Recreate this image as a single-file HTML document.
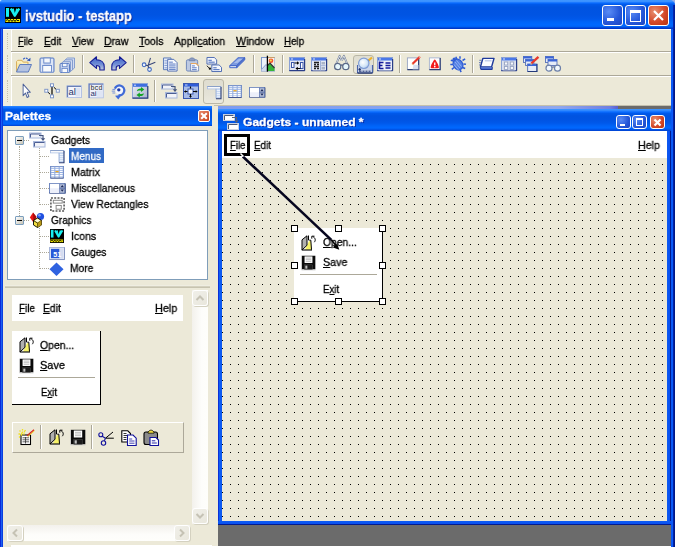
<!DOCTYPE html>
<html><head><meta charset="utf-8"><title>ivstudio - testapp</title>
<style>
html,body{margin:0;padding:0;}
body{width:675px;height:547px;overflow:hidden;position:relative;background:#ece9d8;font-family:"Liberation Sans",sans-serif;font-size:11px;color:#000;}
.a{position:absolute;}
svg{position:absolute;overflow:visible;}
u{text-decoration:underline;text-underline-offset:1px;text-decoration-thickness:1px;}
.t{position:absolute;white-space:nowrap;line-height:13px;font-size:11px;transform-origin:0 0;will-change:transform;-webkit-text-stroke-width:0.3px;}
#title{left:0;top:0;width:675px;height:29px;background:linear-gradient(to bottom,#3f97ff 0px,#3a90ff 1.5px,#0a6cff 3px,#0059ea 4.5px,#0053e0 7px,#0054e3 15px,#0058ea 19px,#0064f8 22px,#0068ff 25px,#0062f5 26.5px,#0040d0 28px,#002fc0 29px);border-radius:2px 5px 0 0;}
#title .txt{left:25px;top:9px;color:#fff;font-weight:bold;font-size:13.5px;line-height:16px;letter-spacing:-0.22px;text-shadow:1px 1px 1px #0a1883;}
.cb{position:absolute;top:5px;width:19px;height:19px;border:1px solid #fff;border-radius:3px;background:radial-gradient(circle at 30% 30%,#5a8cf5 0%,#2456d8 60%,#1e46c0 100%);}
.cb.x{background:radial-gradient(circle at 30% 30%,#e89070 0%,#d4492a 55%,#b8320f 100%);}
#lb{left:0;top:29px;width:3px;height:518px;background:linear-gradient(to right,#0a28d8 0px,#0a28d8 1px,#1a60f0 1px,#1a60f0 2px,#0a3ee0 2px);}
#rb{left:671px;top:29px;width:4px;height:518px;background:linear-gradient(to right,#0a56f4 0px,#0a5cf8 2px,#0428b8 2px,#001a90 3px,#00157c 4px);}
.sv{position:absolute;width:1px;height:18px;background:#aca899;border-right:1px solid #fff;}
.hl{position:absolute;height:1px;}
.pr{position:absolute;width:21px;height:21px;border:1px solid #bab7a6;border-radius:3px;background:linear-gradient(to bottom,#dfddd0,#e4e2d6 60%,#ebe9de);box-sizing:border-box;}
#ptitle{left:3px;top:106px;width:209px;height:20px;background:linear-gradient(to bottom,#2f88ff 0px,#0a6cff 2px,#0059ea 3.5px,#0053e0 6px,#0054e3 10px,#0058ea 13px,#0064f8 16px,#0066fc 18px,#0052e4 19px,#0040d0 20px);}
#ptitle .txt{left:1px;top:3px;color:#fff;font-weight:bold;font-size:12px;line-height:14px;}
.dv{position:absolute;width:0;border-left:1px dotted #aca899;}
.dh{position:absolute;height:0;border-top:1px dotted #aca899;}
.eb{position:absolute;width:7px;height:7px;border:1px solid #7b9ebd;border-radius:1px;background:linear-gradient(to bottom right,#fff,#c5c2b4);}
.eb i{position:absolute;left:1px;top:3px;width:5px;height:1px;background:#000;}
#mdi{left:218px;top:106px;width:453px;height:439px;background:#6b6b6b;}
#child{left:218px;top:106px;width:453px;height:419px;background:#0a46e0;}
#ctitle{left:0;top:4px;width:453px;height:23px;background:linear-gradient(to bottom,#0b5bf0 0%,#2a78ff 8%,#0a5ae8 25%,#0456e2 60%,#0760f5 85%,#0350dc 100%);}
#grid{left:222px;top:158px;width:445px;height:363px;background-color:#ece9d8;background-image:radial-gradient(circle,#000 0.55px,transparent 0.8px);background-size:8px 8px;background-position:-1px 1px;}
.scb{position:absolute;box-sizing:border-box;border:1px solid #fff;border-radius:3px;background:linear-gradient(135deg,#f0efe9,#e9e7dc);box-shadow:1px 1px 0 #d4d1c0;}
.hd{position:absolute;width:5px;height:5px;border:1px solid #000;background:#fff;}
</style></head><body>
<div class="a" style="left:0;top:0;width:8px;height:8px;background:#fff"></div><div class="a" style="left:667px;top:0;width:8px;height:8px;background:#98aee8"></div><div id="title" class="a">
<svg style="left:5px;top:7px" width="16" height="16" viewBox="0 0 16 16"><rect width="16" height="16" fill="#000"/><rect x="1" y="1" width="3" height="8.800" fill="#18f0f0"/><path d="M4.800 2.300L6.500 1l1.300 1 1-.8L9.800 6l1.500-4.800 1 .8 1.300-1 1.500 1.300L10.700 9.500 9.800 10l-.9-.5z" fill="#18f0f0"/><path d="M.5 12h14.500v3H.5z" fill="#f0e800"/><path d="M1 13.500l1.500-1 1.500 2 1.500-2 1.500 2 1.500-2 1.500 2 1.500-2 1.500 1.500 1-1" stroke="#000" stroke-width=".9" fill="none"/></svg>
<div class="t" style="left:25.40px;top:8px;font-size:14px;line-height:16px;transform:scaleX(0.9222);font-weight:bold;color:#fff;text-shadow:1px 1px 1px #0a1883">ivstudio - testapp</div>
<div class="cb" style="left:602px"><div class="a" style="left:4px;top:12px;width:7px;height:3px;background:#fff"></div></div>
<div class="cb" style="left:625px"><div class="a" style="left:4px;top:4px;width:9px;height:8px;border:1px solid #fff;border-top:3px solid #fff"></div></div>
<div class="cb x" style="left:648px"><svg style="left:3px;top:3px" width="13" height="13" viewBox="0 0 13 13"><path d="M2 2l9 9M11 2l-9 9" stroke="#fff" stroke-width="2.200"/></svg></div>
</div>
<div id="lb" class="a"></div><div id="rb" class="a"></div><div class="a" style="left:673px;top:5px;width:2px;height:24px;background:linear-gradient(to right,#0428b8,#001a90)"></div>
<div class="t" style="left:18.00px;top:35px;font-size:11px;line-height:13px;transform:scaleX(0.8526)"><u>F</u>ile</div>
<div class="t" style="left:43.70px;top:35px;font-size:11px;line-height:13px;transform:scaleX(0.9117)"><u>E</u>dit</div>
<div class="t" style="left:71.60px;top:35px;font-size:11px;line-height:13px;transform:scaleX(0.9218)"><u>V</u>iew</div>
<div class="t" style="left:103.60px;top:35px;font-size:11px;line-height:13px;transform:scaleX(0.9500)"><u>D</u>raw</div>
<div class="t" style="left:139.20px;top:35px;font-size:11px;line-height:13px;transform:scaleX(0.9500)"><u>T</u>ools</div>
<div class="t" style="left:174.00px;top:35px;font-size:11px;line-height:13px;transform:scaleX(0.9481)">Appli<u>c</u>ation</div>
<div class="t" style="left:235.60px;top:35px;font-size:11px;line-height:13px;transform:scaleX(0.9704)"><u>W</u>indow</div>
<div class="t" style="left:284.00px;top:35px;font-size:11px;line-height:13px;transform:scaleX(0.8892)"><u>H</u>elp</div>
<div class="a" style="left:3px;top:29px;width:668px;height:1px;background:#fff"></div><div class="a" style="left:3px;top:30px;width:8px;height:76px;background:#efede0"></div><div class="a" style="left:7px;top:33px;width:0;height:16px;border-left:1px dotted #c4c1b0"></div><div class="a" style="left:7px;top:55px;width:0;height:18px;border-left:1px dotted #c4c1b0"></div><div class="a" style="left:7px;top:80px;width:0;height:22px;border-left:1px dotted #c4c1b0"></div><div class="a" style="left:11px;top:30px;width:1px;height:76px;background:#fff"></div><div class="hl a" style="left:11px;top:51px;width:660px;background:#aca899"></div><div class="hl a" style="left:11px;top:52px;width:660px;background:#fff"></div><div class="hl a" style="left:11px;top:75px;width:660px;background:#aca899"></div><div class="hl a" style="left:11px;top:76px;width:660px;background:#fff"></div>
<div class="pr" style="left:353px;top:55px;height:19px"></div><div class="pr" style="left:203px;top:79px;height:25px"></div>
<svg style="left:15px;top:56.5px" width="16" height="16" viewBox="0 0 16 16" preserveAspectRatio="none"><path d="M1.500 15V4.500l1.200-1.200h4.300l1.300 1.800h4.700v2.500" fill="#fbe9a8" stroke="#d8b060" stroke-width="1"/><path d="M2.300 5h4l1.300 1.800h4.500" fill="none" stroke="#fdf6d8" stroke-width=".8"/><path d="M1.500 15l3.300-7.500h11.700L13.300 15z" fill="#b4c3e2" stroke="#5f7dbe" stroke-width="1"/><path d="M8.300 2.300c1.200-1.800 4-1.700 5 .6" fill="none" stroke="#3a62c4" stroke-width="1.200" stroke-dasharray="2 .8"/><path d="M11.800 3.600l3.500.6.200-3.400z" fill="#2f55b8"/></svg>
<svg style="left:38.5px;top:56.5px" width="16" height="16" viewBox="0 0 16 16" preserveAspectRatio="none"><rect x="1" y="1" width="14" height="14.200" rx="1" fill="#c2d0ee" stroke="#5a7cc4"/><path d="M2 2h2.500v13H2zM11.500 2H14v13h-2.500z" fill="#dde6f6"/><rect x="4.800" y="1" width="6.500" height="5" fill="#f4f7fc" stroke="#6686c8" stroke-width=".9"/><rect x="3.700" y="8.500" width="8.800" height="6.700" fill="#f8fafd" stroke="#6686c8" stroke-width=".9"/><path d="M1 15.200h14" stroke="#8aa2d4" stroke-width="1"/></svg>
<svg style="left:59px;top:56.5px" width="16" height="16" viewBox="0 0 16 16" preserveAspectRatio="none"><path d="M6 3l2.500-2h7v10l-2.500 2z" fill="#d3dcf0" stroke="#7c96cc" stroke-width=".9"/><path d="M4 4.800l2.500-2h7v10l-2.500 2z" fill="#d3dcf0" stroke="#7c96cc" stroke-width=".9"/><path d="M2 6.500l2.500-1.800h7v10L9.500 15.500z" fill="#d3dcf0" stroke="#7c96cc" stroke-width=".9"/><rect x="1" y="6.500" width="9.500" height="9" rx="1" fill="#c2d0ee" stroke="#5a7cc4"/><rect x="3.500" y="6.500" width="4.500" height="3.200" fill="#f4f7fc" stroke="#6686c8" stroke-width=".8"/><rect x="3" y="11.500" width="5.500" height="4" fill="#f8fafd" stroke="#6686c8" stroke-width=".8"/></svg>
<svg style="left:89px;top:55.5px" width="16" height="15" viewBox="0 0 16 16" preserveAspectRatio="none"><defs><linearGradient id="ug" x1="0" y1="0" x2="0" y2="1"><stop offset="0" stop-color="#3f63cc"/><stop offset=".55" stop-color="#6f8cd4"/><stop offset="1" stop-color="#c4cde2"/></linearGradient></defs><path d="M.8 7L7.500 .8V4C12.200 4 15.200 6.800 15.200 11.200V15H10.800V12.500C10.800 10.800 9.800 10.200 7.500 10.200V13.200Z" fill="url(#ug)" stroke="#141c94" stroke-width="1.100" stroke-linejoin="round"/></svg>
<svg style="left:110.5px;top:55.5px" width="16" height="15" viewBox="0 0 16 16" preserveAspectRatio="none"><g transform="translate(16,0) scale(-1,1)"><defs><linearGradient id="ug" x1="0" y1="0" x2="0" y2="1"><stop offset="0" stop-color="#3f63cc"/><stop offset=".55" stop-color="#6f8cd4"/><stop offset="1" stop-color="#c4cde2"/></linearGradient></defs><path d="M.8 7L7.500 .8V4C12.200 4 15.200 6.800 15.200 11.200V15H10.800V12.500C10.800 10.800 9.800 10.200 7.500 10.200V13.200Z" fill="url(#ug)" stroke="#141c94" stroke-width="1.100" stroke-linejoin="round"/></g></svg>
<svg style="left:140.5px;top:56.5px" width="15.5" height="16" viewBox="0 0 16 16" preserveAspectRatio="none"><path d="M9.800.8L7.300 9M14.800 5.200L6 8.800" stroke="#39477a" stroke-width="1.100" fill="none"/><circle cx="3.200" cy="7.800" r="1.900" fill="#eef3fb" stroke="#3f69c0" stroke-width="1.100"/><circle cx="8.800" cy="12.500" r="1.900" fill="#eef3fb" stroke="#3f69c0" stroke-width="1.100"/><path d="M5 8.200l2.300.6M7.900 10.800l-.4-1.800" stroke="#39477a" stroke-width="1.100"/></svg>
<svg style="left:162.5px;top:56.5px" width="15" height="15" viewBox="0 0 16 16" preserveAspectRatio="none"><path d="M.5 1h8l0 12.500h-8z" fill="#e4ebf8" stroke="#5878b8" stroke-width="1"/><path d="M1.500 4h3M1.500 6.500h3M1.500 9h3M1.500 11.500h3" stroke="#7f9ad0"/><path d="M5 2.500h6.500l3.500 3.500v9h-10z" fill="#f8faff" stroke="#4a69b0" stroke-width="1"/><path d="M6.500 5.500h4M6.500 7.500h7M6.500 9.500h7M6.500 11.500h7M6.500 13.200h7" stroke="#3e63b8" stroke-width=".9"/></svg>
<svg style="left:185px;top:56.5px" width="15" height="15" viewBox="0 0 16 16" preserveAspectRatio="none"><rect x="1.500" y="3" width="12" height="12" rx="1.500" fill="#bdc9e2" stroke="#6c84b8"/><path d="M4.500 4V2.500l1.500-1.500h3l1.500 1.500V4z" fill="#8c9cc0" stroke="#6c7fa8" stroke-width=".8"/><path d="M6 7h6l2.500 2.500v5.500h-8.500z" fill="#f8faff" stroke="#6c84b8" stroke-width=".9"/><path d="M6 7h6l2.500 2.500" fill="none" stroke="#e8a860" stroke-width="1.100"/><path d="M7.500 9.500h3M7.500 11.500h5M7.500 13.500h5" stroke="#3e63b8" stroke-width=".9"/></svg>
<svg style="left:206px;top:56.5px" width="15.5" height="15" viewBox="0 0 16 16" preserveAspectRatio="none"><path d="M1 .5h7.500l2.500 2.500v4.500h-10z" fill="#f4f7fd" stroke="#4a69b0" stroke-width="1"/><path d="M2.500 3.500h3.500M2.500 5.500h6.500" stroke="#3e63b8" stroke-width="1"/><path d="M6 8.500h7.500l2.500 2.500v4.500h-10z" fill="#f4f7fd" stroke="#4a69b0" stroke-width="1"/><path d="M7.500 11.500h3.500M7.500 13.500h6.500" stroke="#3e63b8" stroke-width="1"/><path d="M.8 9.300l3 3" stroke="#222" stroke-width="1"/><circle cx="4" cy="12.500" r="1.200" fill="#111"/></svg>
<svg style="left:228.5px;top:56.5px" width="15.5" height="15" viewBox="0 0 16 16" preserveAspectRatio="none"><path d="M.8 9.200L9.300.800h7L8 9.200z" fill="#7d9be0" stroke="#3e63c8" stroke-width="1"/><path d="M.8 9.200h7.200v2.200h-7.200z" fill="#dfe6f6" stroke="#3e63c8" stroke-width="1"/><path d="M8 9.200L16.300.800v2.200L8 11.400z" fill="#5577cc" stroke="#3e63c8" stroke-width="1"/><path d="M5 6.500L10.500 1.800h3.500L8.500 6.500z" fill="#a9bdec"/></svg>
<svg style="left:260px;top:56px" width="16" height="16" viewBox="0 0 16 16" preserveAspectRatio="none"><rect x="1.500" y="1.500" width="13" height="13.500" fill="#eef2fa" stroke="#7f98cc"/><path d="M7.500 1.500h7v13.500h-7z" fill="#fbf0e4"/><path d="M7.500 1.500h7" stroke="#c9a06a"/><circle cx="11" cy="4.800" r="2.300" fill="#f2542c"/><circle cx="10.800" cy="4.500" r="1.100" fill="#f9e05a"/><path d="M1.500 13.500l4.500-5 1.500 1.500v5h-6z" fill="#cfd9ee"/><path d="M1.500 13.500l4.500-5 1.500 1.500" fill="none" stroke="#8ea2cc" stroke-width="1"/><path d="M7.500 15V9.500l2.500-2.500 4.500 5v3z" fill="#35b53a"/><path d="M7.500 9.500l2.500-2.500 4.500 5" fill="none" stroke="#333" stroke-width="1.200"/><path d="M7.400 -.3v16" stroke="#000" stroke-width="1.300"/></svg>
<svg style="left:288.5px;top:55.5px" width="16" height="16" viewBox="0 0 16 16" preserveAspectRatio="none"><rect x=".5" y="1.500" width="15" height="13" fill="#e2e6f2" stroke="#8aa0d4" stroke-width="1"/><rect x="1" y="2" width="14" height="2.500" fill="#4a78e8"/><path d="M2 3h2" stroke="#fff" stroke-width=".8"/><path d="M.3 14.700h15.400M15.600 3v11.700" stroke="#2a3e88" stroke-width="1.200" fill="none"/><rect x="2.500" y="6.500" width="2.500" height="5" fill="#fff" stroke="#3a56a8"/><rect x="11.500" y="6.500" width="2.500" height="6" fill="#fff" stroke="#3a56a8"/><path d="M5.500 7h3.500M7 12.500h4.500" stroke="#000" stroke-width="1.200"/><path d="M8 5.300l2.300 1.700L8 8.700zM8.800 10.800L6.500 12.500l2.300 1.700z" fill="#000"/></svg>
<svg style="left:310.5px;top:55.5px" width="16" height="16" viewBox="0 0 16 16" preserveAspectRatio="none"><rect x=".5" y="1.500" width="15" height="13" fill="#e2e6f2" stroke="#8aa0d4" stroke-width="1"/><rect x="1" y="2" width="14" height="2.500" fill="#4a78e8"/><path d="M2 3h2" stroke="#fff" stroke-width=".8"/><path d="M.3 14.700h15.400M15.600 3v11.700" stroke="#2a3e88" stroke-width="1.200" fill="none"/><rect x="1.500" y="5" width="13" height="9.500" fill="#e4e9f4"/><path d="M3 6.500h5M3 8.500h2M6 8.500h2M3 10.500h5M3 12.500h2M6 12.500h2" stroke="#222" stroke-width="1.300"/><path d="M9.500 5v9.500" stroke="#9fb0d6"/><rect x="10.500" y="6" width="3.500" height="2.500" fill="#aab4c8"/><rect x="10.500" y="11" width="3.500" height="2.500" fill="#aab4c8"/><path d="M9.500 9.700h5" stroke="#9fb0d6"/></svg>
<svg style="left:333.5px;top:54.8px" width="15.5" height="16" viewBox="0 0 16 16" preserveAspectRatio="none"><path d="M2.300 9L5.800 .8l2 4.700M13.700 9L10.200 .8l-2 4.700" stroke="#66748e" stroke-width="1.900" fill="none" stroke-linejoin="round"/><path d="M2.300 9L5.800 .8l2 4.700M13.700 9L10.200 .8l-2 4.700" stroke="#f4f6fa" stroke-width=".8" fill="none" stroke-linejoin="round"/><circle cx="3.800" cy="11.500" r="3.200" fill="#e8f8fc" stroke="#5c6a88" stroke-width="1.300"/><circle cx="12.200" cy="11.500" r="3.200" fill="#e8f8fc" stroke="#5c6a88" stroke-width="1.300"/><path d="M6.700 10.500c.9-.7 1.700-.7 2.600 0" stroke="#5c6a88" stroke-width="1.300" fill="none"/></svg>
<svg style="left:356.5px;top:56.5px" width="16" height="16" viewBox="0 0 16 16" preserveAspectRatio="none"><defs><radialGradient id="mg" cx=".4" cy=".4" r=".7"><stop offset="0" stop-color="#ffffff"/><stop offset=".6" stop-color="#d4e6f8"/><stop offset="1" stop-color="#9ebce8"/></radialGradient></defs><path d="M.5 8v8h15V8" fill="#ccd6ea" stroke="none"/><path d="M.5 8v8M15.500 8v8" fill="none" stroke="#4a64a8" stroke-width="1.100"/><path d="M.5 16h15" stroke="#1e3270" stroke-width="1.400"/><path d="M2 11.800h1.300v1.300H2zM2 14.200h2.500M5.500 14.200h2M8.500 14.200h2M11.500 14.200h2" stroke="#1e3270" fill="#1e3270" stroke-width="1"/><path d="M11.500 3.500L15 .5" stroke="#f0b429" stroke-width="2.200"/><path d="M10.500 4.500l1.300-1.200" stroke="#666" stroke-width="2"/><circle cx="6.800" cy="6.300" r="5.200" fill="url(#mg)" stroke="#7f9cd4" stroke-width="1.200"/></svg>
<svg style="left:376.5px;top:55.5px" width="16" height="16" viewBox="0 0 16 16" preserveAspectRatio="none"><rect x=".5" y="1.500" width="15" height="13" fill="#e2e6f2" stroke="#8aa0d4" stroke-width="1"/><rect x="1" y="2" width="14" height="2.500" fill="#4a78e8"/><path d="M2 3h2" stroke="#fff" stroke-width=".8"/><path d="M.3 14.700h15.400M15.600 3v11.700" stroke="#2a3e88" stroke-width="1.200" fill="none"/><rect x="1.500" y="5" width="13" height="9.500" fill="#eef2fa"/><path d="M2.500 5.500v7.500M2.500 6.500h4M2.500 9.500h3M2.500 12.500h4" stroke="#141a9a" stroke-width="1.600" fill="none"/><path d="M8.500 7h5M8.500 9.500h5M8.500 12h5" stroke="#141a9a" stroke-width="1.300"/></svg>
<svg style="left:406px;top:56px" width="15" height="15" viewBox="0 0 16 16" preserveAspectRatio="none"><rect x="1.500" y="2" width="12" height="12.500" fill="#fff" stroke="#9aa7c4" stroke-width="1"/><path d="M1.500 14.500h12V2" fill="none" stroke="#2c3e74" stroke-width="1.300"/><path d="M8 9L13.500 9.500v5H7z" fill="#c8d3ea" opacity=".7"/><path d="M6.800 8.500L14.800 .8" stroke="#e8382c" stroke-width="2.400"/><path d="M6 9.500l1.200-1.800 1 1z" fill="#f3c073"/><path d="M13.800 1.600l1.200-1" stroke="#f4a090" stroke-width="2"/></svg>
<svg style="left:428px;top:56px" width="15" height="15" viewBox="0 0 16 16" preserveAspectRatio="none"><rect x="1.500" y="2" width="11.500" height="12.500" fill="#fff" stroke="#aab6d0" stroke-width="1"/><path d="M1.500 14.500h11.500V2" fill="none" stroke="#2c3e74" stroke-width="1.300"/><path d="M7.200 4.800C6 6.500 4.300 9.500 3.800 12h6.800C10.100 9.500 8.400 6.500 7.200 4.800z" fill="#f21c1c" stroke="#f21c1c" stroke-width="2" stroke-linejoin="round"/><path d="M7.200 6.800v3" stroke="#fff" stroke-width="1.400"/><circle cx="7.200" cy="11.300" r=".9" fill="#fff"/></svg>
<svg style="left:450px;top:56px" width="16" height="16" viewBox="0 0 16 16" preserveAspectRatio="none"><ellipse cx="8" cy="8.500" rx="4.600" ry="5.600" transform="rotate(-35 8 8.500)" fill="#5580e4" stroke="#2f5cd4" stroke-width="1.200"/><path d="M5 6l5 6M4 8.500l4.500 5.500M6.500 4.500l5 6" stroke="#9ab8f4" stroke-width=".9"/><path d="M3.500 5L.8 4.200M3 8.500H.3M4 11.500l-2.200 1.800M7 3.500L5.800 .8M10 2.800V.3M12.500 4.500L15.200 2.800M13.500 8l2.500.3M12.500 11.500l2.700 1M10 14l1.200 2" stroke="#2f5cd4" stroke-width="1.500"/><circle cx="4.300" cy="3.300" r="1.800" fill="#2f5cd4"/></svg>
<svg style="left:479px;top:56.5px" width="15.5" height="15" viewBox="0 0 16 16" preserveAspectRatio="none"><path d="M4 1.500h11.500L13 10.500H1.500z" fill="#fbfcff" stroke="#1e3a9c" stroke-width="1.500" stroke-linejoin="round"/><path d="M1.200 11l1 2.300h11.300l.3-2.500" fill="#4a6cd0" stroke="#1e3a9c" stroke-width="1.100" stroke-linejoin="round"/><path d="M6 4h7" stroke="#c4d0ec" stroke-width="1.600"/><path d="M.3 3.500h2.200M0 6h1.800M0 8.500h1.200" stroke="#5a72b0" stroke-width="1"/></svg>
<svg style="left:500.5px;top:56px" width="16" height="16" viewBox="0 0 16 16" preserveAspectRatio="none"><rect x=".5" y="1.500" width="15" height="13" fill="#e2e6f2" stroke="#8aa0d4" stroke-width="1"/><rect x="1" y="2" width="14" height="2.500" fill="#4a78e8"/><path d="M2 3h2" stroke="#fff" stroke-width=".8"/><path d="M.3 14.700h15.400M15.600 3v11.700" stroke="#2a3e88" stroke-width="1.200" fill="none"/><rect x="1.500" y="5" width="13" height="9.500" fill="#d4dae8"/><rect x="3.500" y="6" width="3.200" height="3" fill="#f8f9fc" stroke="#98a4c4" stroke-width=".9"/><rect x="9.300" y="6" width="3.200" height="3" fill="#f8f9fc" stroke="#98a4c4" stroke-width=".9"/><rect x="3.500" y="10.500" width="3.200" height="3" fill="#f8f9fc" stroke="#98a4c4" stroke-width=".9"/><rect x="9.300" y="10.500" width="3.200" height="3" fill="#f8f9fc" stroke="#98a4c4" stroke-width=".9"/></svg>
<svg style="left:523px;top:56px" width="16.5" height="16" viewBox="0 0 16 16" preserveAspectRatio="none"><rect x="0.5" y="0.5" width="8" height="6" fill="#e6ecf8" stroke="#5570b8" stroke-width=".9"/><rect x="0.5" y="0.5" width="8" height="2" fill="#3a64d8"/><rect x="2.5" y="3.5" width="8" height="6" fill="#e6ecf8" stroke="#5570b8" stroke-width=".9"/><rect x="2.5" y="3.5" width="8" height="2" fill="#3a64d8"/><rect x="4.5" y="8" width="9" height="7.5" fill="#e6ecf8" stroke="#5570b8" stroke-width=".9"/><rect x="4.5" y="8" width="9" height="2" fill="#3a64d8"/><path d="M8 7.500L15 .8" stroke="#e8382c" stroke-width="2.300"/><path d="M7 9l1-1.800 1 1z" fill="#f3c073"/><path d="M4.500 15.500h9V8" fill="none" stroke="#243a7a" stroke-width="1"/></svg>
<svg style="left:545px;top:56px" width="16" height="16" viewBox="0 0 16 16" preserveAspectRatio="none"><rect x="0.5" y="0.5" width="8" height="6" fill="#e6ecf8" stroke="#5570b8" stroke-width=".9"/><rect x="0.5" y="0.5" width="8" height="2" fill="#3a64d8"/><rect x="3" y="3.5" width="9" height="6" fill="#e6ecf8" stroke="#5570b8" stroke-width=".9"/><rect x="3" y="3.5" width="9" height="2" fill="#3a64d8"/><circle cx="4" cy="12.200" r="3" fill="#f2f8fc" stroke="#6c7fa8" stroke-width="1.200"/><circle cx="12.500" cy="12.200" r="3" fill="#f2f8fc" stroke="#6c7fa8" stroke-width="1.200"/><path d="M7 11.500c.8-.8 1.800-.8 2.600 0" stroke="#6c7fa8" stroke-width="1.100" fill="none"/></svg>
<div class="sv" style="left:82px;top:55px"></div><div class="sv" style="left:133px;top:55px"></div><div class="sv" style="left:253px;top:55px"></div><div class="sv" style="left:282px;top:55px"></div><div class="sv" style="left:399px;top:55px"></div><div class="sv" style="left:472px;top:55px"></div><div class="sv" style="left:154px;top:80px;height:22px"></div>
<svg style="left:20.8px;top:82.5px" width="13.5" height="16" viewBox="0 0 16 16" preserveAspectRatio="none"><path d="M2.500 1.200v11.500l2.800-2.600 2 4.400 2-.9-2-4.300h3.800z" fill="#fff" stroke="#4a5f98" stroke-width="1.100" stroke-linejoin="round"/></svg>
<svg style="left:44px;top:83px" width="16" height="15.5" viewBox="0 0 16 16" preserveAspectRatio="none"><path d="M8 2.500v11" stroke="#000" stroke-width="1.200"/><path d="M3.500 9l2.500 2.500M10 4.500l2 2" stroke="#000" stroke-width="1"/><rect x="6.500" y=".8" width="3" height="3" fill="#fff" stroke="#7f97c8" stroke-width="1"/><rect x="6.500" y="12.300" width="3" height="3" fill="#fff" stroke="#7f97c8" stroke-width="1"/><rect x=".8" y="6.500" width="3" height="3" fill="#fff" stroke="#7f97c8" stroke-width="1"/><rect x="12.300" y="6.500" width="3" height="3" fill="#fff" stroke="#7f97c8" stroke-width="1"/></svg>
<svg style="left:66px;top:83px" width="16" height="15" viewBox="0 0 16 16" preserveAspectRatio="none"><rect x="1" y="3" width="14.500" height="12.500" fill="#f4f6fc" stroke="#b4c2e4" stroke-width="1"/><path d="M1.500 15V3.500h13.500" fill="none" stroke="#6a80b8" stroke-width="1.300"/><rect x="9.500" y="5" width="5" height="9.500" fill="#dde3f2"/><text x="2.500" y="13" font-family="Liberation Sans" font-size="9.500" fill="#26346c">al</text></svg>
<svg style="left:88px;top:83px" width="15.5" height="15" viewBox="0 0 16 16" preserveAspectRatio="none"><rect x=".8" y=".8" width="15" height="15" fill="#eef1fa" stroke="#b4c2e4" stroke-width="1"/><path d="M1.200 16V1.200h14.500" fill="none" stroke="#6a80b8" stroke-width="1.300"/><rect x="9" y="8" width="6.300" height="7" fill="#dfe5f4"/><text x="2.500" y="7.300" font-family="Liberation Mono" font-size="7" fill="#222" textLength="12.500" lengthAdjust="spacingAndGlyphs">bcd</text><text x="2.500" y="14.300" font-family="Liberation Sans" font-size="8" fill="#26346c">ai</text></svg>
<svg style="left:110.5px;top:83.5px" width="15" height="15" viewBox="0 0 16 16" preserveAspectRatio="none"><circle cx="9" cy="6.800" r="4" fill="#f2f5fc"/><path d="M4.100 5A5.200 5.200 0 1 1 8 11.900" fill="none" stroke="#3f6ad8" stroke-width="2.400"/><path d="M4.300 12.600L11 11.800 7.800 16.600z" fill="#3f6ad8"/><circle cx="8.300" cy="6.200" r="1.800" fill="#1e3aa8"/><path d="M1.500 5.800h3M.8 7.600h3.400M1.500 9.600h3" stroke="#6f8cdc" stroke-width="1"/></svg>
<svg style="left:131.5px;top:82px" width="16" height="16" viewBox="0 0 16 16" preserveAspectRatio="none"><defs><linearGradient id="wg" x1="0" y1="0" x2="1" y2="1"><stop offset="0" stop-color="#eef0f8"/><stop offset="1" stop-color="#a8b2cc"/></linearGradient></defs><rect x=".5" y="1.500" width="15" height="14.500" fill="url(#wg)" stroke="#8ea4d8" stroke-width="1"/><rect x="1" y="2" width="14" height="2.800" fill="#3f6fe0"/><path d="M2 3.200h2" stroke="#fff" stroke-width=".8"/><path d="M.5 16.200h15.300V4" fill="none" stroke="#2a3c78" stroke-width="1.200"/><path d="M5 9.300c0-2 1.500-2.800 4-2.800V5l3.300 2.500L9 10V8.500c-1.500 0-2.500 0-4 .8zM11.800 11.200c0 2-1.500 2.800-4 2.800v1.500L4.500 13l3.300-2.500V12c1.500 0 2.500 0 4-.8z" fill="#12a422"/></svg>
<svg style="left:161px;top:83px" width="16" height="16" viewBox="0 0 16 16" preserveAspectRatio="none"><rect x=".5" y="1" width="11.500" height="5" fill="#f2f3f8" stroke="#a8b8dc" stroke-width="1"/><path d="M1.500 5.500V2h10" fill="none" stroke="#4c5f94" stroke-width="1"/><rect x="4.500" y="9.500" width="11.500" height="5.500" fill="#f2f3f8" stroke="#a8b8dc" stroke-width="1"/><path d="M5.500 14.500v-4h10" fill="none" stroke="#4c5f94" stroke-width="1"/><path d="M10 3.500h4v3.500" fill="none" stroke="#44557f" stroke-width="1.200"/><path d="M11.800 6.300h4.400L14 9z" fill="#44557f"/></svg>
<svg style="left:183px;top:83px" width="16" height="16" viewBox="0 0 16 16" preserveAspectRatio="none"><rect x=".5" y=".5" width="15" height="15" fill="#a8bce8" stroke="#3a58b0" stroke-width="1"/><rect x="1" y="1" width="14" height="2.500" fill="#2f5cd8"/><path d="M2 2h2.500" stroke="#fff" stroke-width=".8"/><rect x="5" y="6" width="5" height="5" fill="#f4f7fd" stroke="#3a58b0" stroke-width="1"/><path d="M7.500 3.500v2M7.500 11v3M1.500 8.500h3M10 8.500h4" stroke="#000" stroke-width="1.200"/><path d="M6.200 13l1.300 2 1.300-2zM12.700 7.200l2 1.300-2 1.300zM3 7.200L1 8.500l2 1.300z" fill="#000"/></svg>
<svg style="left:207px;top:86px" width="14.5" height="13" viewBox="0 0 14.500 13.500" preserveAspectRatio="none"><rect x=".4" y=".4" width="13.600" height="2.600" fill="#fff" stroke="#a8bce0" stroke-width=".8"/><path d="M.5 .6h13.500" stroke="#7088b8" stroke-width=".7"/><rect x="9" y="3" width="5" height="10" fill="#c4d6f2"/><path d="M9.500 4.700h4M9.500 6.700h4M9.500 8.700h4M9.500 10.700h4" stroke="#f2f6fc" stroke-width=".9"/><path d="M9 3v10" stroke="#8ea6d4" stroke-width=".8"/><path d="M14 1v12.200H9" fill="none" stroke="#2c3e74" stroke-width="1.100"/></svg>
<svg style="left:228px;top:85px" width="14" height="13" viewBox="0 0 16 16" preserveAspectRatio="none"><rect x=".5" y=".5" width="15" height="14.500" fill="#94aee0" stroke="#6f8ac4" stroke-width="1"/><path d="M1.500 2.200h13M1.500 4.600h13M1.500 7h13M1.500 9.400h13M1.500 11.800h13M1.500 14h13" stroke="#fff" stroke-width="1.400"/><path d="M5.500 1v14M10.500 1v14" stroke="#94aee0" stroke-width="1.200"/><rect x="6.200" y="6.300" width="3.700" height="1.500" fill="#f0a818"/><path d="M.5 15.300h15" stroke="#3a4f8c" stroke-width="1.200"/></svg>
<svg style="left:249px;top:86.5px" width="16" height="14" viewBox="0 0 16 16" preserveAspectRatio="none"><rect x=".5" y=".5" width="15" height="11" fill="#fff" stroke="#7088c0" stroke-width="1"/><path d="M.5 11.500h15.300V.5" fill="none" stroke="#2c3e74" stroke-width="1.200"/><path d="M1 6h9.500v5.500H1z" fill="#eceffa"/><rect x="10.500" y="1" width="5" height="10.500" fill="#b4bed6" stroke="#6078b0" stroke-width=".8"/><path d="M10.500 6h5" stroke="#4a62a0" stroke-width=".9"/><path d="M11.300 4.800L13 2.200l1.700 2.600zM11.300 7.400L13 10l1.700-2.600z" fill="#1e2c5c"/></svg>
<div id="ptitle" class="a"></div><div class="t" style="left:4.70px;top:110px;font-size:11.5px;line-height:13px;transform:scaleX(1.0498);font-weight:bold;color:#fff">Palettes</div><div class="a" style="left:4px;top:106px;width:208px;height:0"><div class="a" style="left:194px;top:4px;width:10px;height:10px;border:1px solid #fff;border-radius:2px;background:linear-gradient(135deg,#e88a6c,#c8421c)"><svg style="left:1px;top:1px" width="8" height="8" viewBox="0 0 8 8"><path d="M1.200 1.200l5.600 5.600M6.800 1.200l-5.600 5.600" stroke="#fff" stroke-width="2.100"/></svg></div></div>
<div id="tree" class="a" style="left:7px;top:130px;width:199px;height:148px;background:#fff;border:1px solid #7f9db9"></div>
<div class="dv" style="left:19px;top:146px;height:70px"></div><div class="dv" style="left:39px;top:148px;height:57px"></div><div class="dv" style="left:39px;top:228px;height:41px"></div><div class="dh" style="left:24px;top:140px;width:5px"></div><div class="dh" style="left:24px;top:220px;width:5px"></div><div class="dh" style="left:40px;top:156px;width:9px"></div><div class="dh" style="left:40px;top:172px;width:9px"></div><div class="dh" style="left:40px;top:188px;width:9px"></div><div class="dh" style="left:40px;top:204px;width:9px"></div><div class="dh" style="left:40px;top:236px;width:9px"></div><div class="dh" style="left:40px;top:252px;width:9px"></div><div class="dh" style="left:40px;top:268px;width:9px"></div><div class="eb" style="left:15px;top:136px"><i></i></div><div class="eb" style="left:15px;top:216px"><i></i></div>
<svg style="left:29px;top:132px" width="16" height="16" viewBox="0 0 16 16" preserveAspectRatio="none"><rect x=".5" y="1" width="11.500" height="5" fill="#f2f3f8" stroke="#a8b8dc" stroke-width="1"/><path d="M1.500 5.500V2h10" fill="none" stroke="#4c5f94" stroke-width="1"/><rect x="4.500" y="9.500" width="11.500" height="5.500" fill="#f2f3f8" stroke="#a8b8dc" stroke-width="1"/><path d="M5.500 14.500v-4h10" fill="none" stroke="#4c5f94" stroke-width="1"/><path d="M10 3.500h4v3.500" fill="none" stroke="#44557f" stroke-width="1.200"/><path d="M11.800 6.300h4.400L14 9z" fill="#44557f"/></svg>
<svg style="left:50px;top:150px" width="14.5" height="13" viewBox="0 0 14.500 13.500" preserveAspectRatio="none"><rect x=".4" y=".4" width="13.600" height="2.600" fill="#fff" stroke="#a8bce0" stroke-width=".8"/><path d="M.5 .6h13.500" stroke="#7088b8" stroke-width=".7"/><rect x="9" y="3" width="5" height="10" fill="#c4d6f2"/><path d="M9.500 4.700h4M9.500 6.700h4M9.500 8.700h4M9.500 10.700h4" stroke="#f2f6fc" stroke-width=".9"/><path d="M9 3v10" stroke="#8ea6d4" stroke-width=".8"/><path d="M14 1v12.200H9" fill="none" stroke="#2c3e74" stroke-width="1.100"/></svg>
<svg style="left:50px;top:166.3px" width="14" height="12.7" viewBox="0 0 16 16" preserveAspectRatio="none"><rect x=".5" y=".5" width="15" height="14.500" fill="#94aee0" stroke="#6f8ac4" stroke-width="1"/><path d="M1.500 2.200h13M1.500 4.600h13M1.500 7h13M1.500 9.400h13M1.500 11.800h13M1.500 14h13" stroke="#fff" stroke-width="1.400"/><path d="M5.500 1v14M10.500 1v14" stroke="#94aee0" stroke-width="1.200"/><rect x="6.200" y="6.300" width="3.700" height="1.500" fill="#f0a818"/><path d="M.5 15.300h15" stroke="#3a4f8c" stroke-width="1.200"/></svg>
<svg style="left:48.8px;top:183px" width="16.3" height="14" viewBox="0 0 16 16" preserveAspectRatio="none"><rect x=".5" y=".5" width="15" height="11" fill="#fff" stroke="#7088c0" stroke-width="1"/><path d="M.5 11.500h15.300V.5" fill="none" stroke="#2c3e74" stroke-width="1.200"/><path d="M1 6h9.500v5.500H1z" fill="#eceffa"/><rect x="10.500" y="1" width="5" height="10.500" fill="#b4bed6" stroke="#6078b0" stroke-width=".8"/><path d="M10.500 6h5" stroke="#4a62a0" stroke-width=".9"/><path d="M11.300 4.800L13 2.200l1.700 2.600zM11.300 7.400L13 10l1.700-2.600z" fill="#1e2c5c"/></svg>
<svg style="left:49.5px;top:196.5px" width="15" height="15" viewBox="0 0 16 16" preserveAspectRatio="none"><rect x="1" y="1" width="14" height="14" fill="#fff" stroke="#000" stroke-width="1.100" stroke-dasharray="2.100 1.400"/><rect x="3.500" y="3.500" width="9.500" height="3" fill="#fff" stroke="#808080" stroke-width="1"/><rect x="6.500" y="9" width="5.500" height="4" fill="#fff" stroke="#808080" stroke-width="1"/></svg>
<svg style="left:29px;top:212px" width="16" height="16" viewBox="0 0 16 16" preserveAspectRatio="none"><path d="M.8 5.500L4 .5l3.500 4.500L4.500 10.500z" fill="#e81818"/><path d="M4 .5l3.500 4.500L4.500 10.500z" fill="#a80c0c"/><circle cx="11.500" cy="4.500" r="3.600" fill="#2050e0"/><circle cx="10.500" cy="3.300" r="1.300" fill="#7fa4f8"/><path d="M4.500 8.500l4-2.500 4 2.500v4.500l-4 2.500-4-2.500z" fill="#f4e040" stroke="#000" stroke-width=".9" stroke-linejoin="round"/><path d="M4.500 8.500l4 2.500 4-2.500M8.500 11v4.500" stroke="#000" stroke-width=".8" fill="none"/><path d="M8.500 11l4-2.500v4.500l-4 2.500z" fill="#b89818"/><path d="M5.500 8.500l3-1.800 3 1.800-3 1.800z" fill="#fdfbe0"/></svg>
<svg style="left:50px;top:229px" width="14" height="14" viewBox="0 0 16 16"><rect width="16" height="16" fill="#000"/><rect x="1" y="1" width="3" height="8.800" fill="#18f0f0"/><path d="M4.800 2.300L6.500 1l1.300 1 1-.8L9.800 6l1.500-4.800 1 .8 1.300-1 1.500 1.300L10.700 9.500 9.800 10l-.9-.5z" fill="#18f0f0"/><path d="M.5 12h14.500v3H.5z" fill="#f0e800"/><path d="M1 13.500l1.500-1 1.500 2 1.500-2 1.500 2 1.500-2 1.500 2 1.500-2 1.500 1.500 1-1" stroke="#000" stroke-width=".9" fill="none"/></svg>
<svg style="left:49px;top:247px" width="16" height="13" viewBox="0 0 16 14" preserveAspectRatio="none"><rect x=".5" y=".5" width="15" height="13" fill="#dfe5f4" stroke="#a8b6d8" stroke-width="1"/><path d="M.5 13.500h15V.5" fill="none" stroke="#8494c0" stroke-width="1"/><rect x="2" y="2" width="8.500" height="10" fill="#2858d8"/><rect x="10.500" y="2" width="3.500" height="10" fill="#d4dcf0"/><text x="4.200" y="10.300" font-family="Liberation Sans" font-size="8" font-weight="bold" fill="#fff" textLength="8" lengthAdjust="spacingAndGlyphs">51</text></svg>
<svg style="left:49px;top:261.5px" width="15" height="14.5" viewBox="0 0 16 16" preserveAspectRatio="none"><path d="M8 .5l7.500 7.500-7.500 7.500L.5 8z" fill="#2f62e0"/></svg>
<div class="a" style="left:69px;top:148px;width:35px;height:15px;background:#316ac5"></div><div class="t" style="left:50.90px;top:134px;font-size:11px;line-height:13px;transform:scaleX(0.9404)">Gadgets</div><div class="t" style="left:71.20px;top:150px;font-size:11px;line-height:13px;transform:scaleX(0.9091);color:#fff">Menus</div><div class="t" style="left:71.10px;top:166px;font-size:11px;line-height:13px;transform:scaleX(0.9693)">Matrix</div><div class="t" style="left:71.10px;top:182px;font-size:11px;line-height:13px;transform:scaleX(0.9184)">Miscellaneous</div><div class="t" style="left:70.70px;top:198px;font-size:11px;line-height:13px;transform:scaleX(0.9482)">View Rectangles</div><div class="t" style="left:50.70px;top:214px;font-size:11px;line-height:13px;transform:scaleX(0.9182)">Graphics</div><div class="t" style="left:71.10px;top:230px;font-size:11px;line-height:13px;transform:scaleX(0.9585)">Icons</div><div class="t" style="left:70.70px;top:246px;font-size:11px;line-height:13px;transform:scaleX(0.9182)">Gauges</div><div class="t" style="left:69.80px;top:262px;font-size:11px;line-height:13px;transform:scaleX(0.9290)">More</div>
<div class="hl a" style="left:5px;top:285px;width:205px;background:#efede1"></div><div class="hl a" style="left:5px;top:286px;width:205px;background:#d4d1bf"></div><div class="hl a" style="left:5px;top:287px;width:205px;background:#c7c3af"></div>
<div class="a" style="left:12px;top:295px;width:171px;height:26px;background:#fff"></div><div class="t" style="left:19.30px;top:302px;font-size:11px;line-height:13px;transform:scaleX(0.9034)"><u>F</u>ile</div><div class="t" style="left:43.30px;top:302px;font-size:11px;line-height:13px;transform:scaleX(0.9433)"><u>E</u>dit</div><div class="t" style="left:154.50px;top:302px;font-size:11px;line-height:13px;transform:scaleX(0.9821)"><u>H</u>elp</div>
<div class="a" style="left:12px;top:331px;width:88px;height:73px;background:#fff"></div><div class="a" style="left:100px;top:331px;width:1px;height:74px;background:#000"></div><div class="a" style="left:12px;top:404px;width:89px;height:1px;background:#000"></div><svg style="left:19px;top:337px" width="16" height="16" viewBox="0 0 16 16"><path d="M8 6h1.800l.7 8.700H4z" fill="#f6f268"/><path d="M1 4.800L6 .8v9.500L1 15z" fill="#b0b0b0" stroke="#000" stroke-width="1" stroke-linejoin="round"/><path d="M7.500 .5v4.500" stroke="#000" stroke-width="1"/><path d="M9.800 5.200l.7 9.500" stroke="#000" stroke-width="1"/><path d="M7.500 5.200h2.500" stroke="#000" stroke-width=".8"/><path d="M.8 15h10.200" stroke="#000" stroke-width="1.100"/><path d="M13.300 7.200C15 5.200 14.300 2.800 11.800 1.600" fill="none" stroke="#000" stroke-width="1"/><path d="M10.800 1.200h2.700M10.800 1.200v2.500" fill="none" stroke="#000" stroke-width="1"/></svg><svg style="left:18.500px;top:357.500px" width="15" height="15" viewBox="0 0 16 16"><rect x=".8" y=".8" width="14.500" height="14.500" fill="#0a0a0a"/><path d="M.5 1v15h15" fill="none" stroke="#d0d0d0" stroke-width=".8"/><rect x="3.800" y="1.500" width="8.400" height="7" fill="#fff"/><path d="M5 3.300h6M5 5h6M5 6.700h6" stroke="#a8a8a8" stroke-width=".8"/><rect x="3.800" y="10.500" width="8.400" height="4.800" fill="#1a1a1a" stroke="#555" stroke-width=".5"/><rect x="4.600" y="11.300" width="2.200" height="3.300" fill="#c0c0c0"/></svg><div class="t" style="left:40.40px;top:339px;font-size:11px;line-height:13px;transform:scaleX(0.9479)"><u>O</u>pen...</div><div class="t" style="left:40.40px;top:359px;font-size:11px;line-height:13px;transform:scaleX(0.9928)"><u>S</u>ave</div><div class="t" style="left:40.80px;top:386px;font-size:11px;line-height:13px;transform:scaleX(0.8736)">E<u>x</u>it</div><div class="hl a" style="left:18px;top:377px;width:77px;background:#aca899"></div>
<div class="a" style="left:12px;top:422px;width:170px;height:29px;border-top:1px solid #fff;border-left:1px solid #fff;border-right:1px solid #aca899;border-bottom:1px solid #aca899;box-sizing:content-box"></div><div class="a" style="left:40px;top:425px;width:1px;height:24px;background:#aca899;border-right:1px solid #fff"></div><div class="a" style="left:91px;top:425px;width:1px;height:24px;background:#aca899;border-right:1px solid #fff"></div><svg style="left:17.5px;top:428.5px" width="16" height="16" viewBox="0 0 16 16"><rect x="3" y="6" width="9.500" height="9.500" fill="#fff" stroke="#000" stroke-width="1.100"/><path d="M4.500 8.800h6.500M4.500 10.800h6.500M4.500 12.800h6.500M7.500 8v6.500" stroke="#333" stroke-width=".8"/><path d="M1.500 1.500l1 1M3.500 3.500l1 1M4.500 0v1.500M4.500 2.500v1.500M.5 5h1.500M2.800 5h1.500M7.500 1l-1 1.500M1 8.500l1-1M3 6.500l1-1M6.500 4.500l-1 1M6 2.500l.8.800" stroke="#f0e020" stroke-width="1.300"/><path d="M9 6.800L16 .8" stroke="#d8281c" stroke-width="1.300"/><path d="M9.800 7.800L16.500 1.800" stroke="#f0d020" stroke-width="1"/></svg><svg style="left:48.5px;top:429px" width="16" height="16" viewBox="0 0 16 16"><path d="M8 6h1.800l.7 8.700H4z" fill="#f6f268"/><path d="M1 4.800L6 .8v9.500L1 15z" fill="#b0b0b0" stroke="#000" stroke-width="1" stroke-linejoin="round"/><path d="M7.500 .5v4.500" stroke="#000" stroke-width="1"/><path d="M9.800 5.200l.7 9.500" stroke="#000" stroke-width="1"/><path d="M7.500 5.200h2.500" stroke="#000" stroke-width=".8"/><path d="M.8 15h10.200" stroke="#000" stroke-width="1.100"/><path d="M13.300 7.200C15 5.200 14.300 2.800 11.800 1.600" fill="none" stroke="#000" stroke-width="1"/><path d="M10.800 1.200h2.700M10.800 1.200v2.500" fill="none" stroke="#000" stroke-width="1"/></svg><svg style="left:69.5px;top:428.5px" width="16" height="16" viewBox="0 0 16 16"><rect x=".8" y=".8" width="14.500" height="14.500" fill="#0a0a0a"/><path d="M.5 1v15h15" fill="none" stroke="#d0d0d0" stroke-width=".8"/><rect x="3.800" y="1.500" width="8.400" height="7" fill="#fff"/><path d="M5 3.300h6M5 5h6M5 6.700h6" stroke="#a8a8a8" stroke-width=".8"/><rect x="3.800" y="10.500" width="8.400" height="4.800" fill="#1a1a1a" stroke="#555" stroke-width=".5"/><rect x="4.600" y="11.300" width="2.200" height="3.300" fill="#c0c0c0"/></svg><svg style="left:97.5px;top:430.5px" width="16" height="16" viewBox="0 0 16 16"><path d="M7.500 7.200L15 1M7.500 7.200h8.300" stroke="#000" stroke-width="1" fill="none"/><circle cx="2.800" cy="3.800" r="2" fill="none" stroke="#10109c" stroke-width="1.100"/><circle cx="5.500" cy="12" r="2.200" fill="none" stroke="#10109c" stroke-width="1.100"/><path d="M4.200 5.300L7.500 7.200M6.300 9.800l1.200-2.600" stroke="#10109c" stroke-width="1.100"/></svg><svg style="left:120.5px;top:429.5px" width="16" height="16" viewBox="0 0 16 16"><path d="M.8 .8h6l2.700 2.700v8.500H.8z" fill="#fff" stroke="#000" stroke-width="1.100"/><path d="M2.500 3.500h3M2.500 5.500h4.500M2.500 7.500h3M2.500 9.500h3" stroke="#000" stroke-width=".8"/><path d="M6.500 5h5.500l3.200 3.200v7.300H6.500z" fill="#fff" stroke="#10109c" stroke-width="1.100"/><path d="M8.200 9h3M8.200 11h5.300M8.200 13.200h5.300" stroke="#10109c" stroke-width=".8"/></svg><svg style="left:143px;top:429.5px" width="16" height="16" viewBox="0 0 16 16"><rect x="1" y="2" width="13.500" height="12.500" rx="2" fill="#8a8a8a" stroke="#000" stroke-width="1.100"/><path d="M5 3.200V2l2-1.800h2L11 2v1.200z" fill="#f0dc40" stroke="#000" stroke-width=".7"/><path d="M7 7.500h6l2.500 2.500v5.500H7z" fill="#fff" stroke="#10109c" stroke-width="1.100"/><path d="M8.800 10.800h3.500M8.800 13h5" stroke="#10109c" stroke-width=".9"/></svg>
<div class="a" style="left:192px;top:290px;width:16px;height:234px;background:linear-gradient(to right,#f3f1ec,#fdfdfb 60%,#fefefb)"></div><div class="a" style="left:7px;top:525px;width:183px;height:16px;background:linear-gradient(to bottom,#f3f1ec,#fdfdfb 60%,#fefefb)"></div><div class="scb" style="left:192px;top:290px;width:16px;height:16px"><svg style="left:0px;top:0px" width="14" height="14" viewBox="0 0 14 14"><path d="M3.500 9l3.500-3.500L10.500 9" fill="none" stroke="#c5c2b4" stroke-width="2"/></svg></div><div class="scb" style="left:192px;top:508px;width:16px;height:16px"><svg style="left:0px;top:0px" width="14" height="14" viewBox="0 0 14 14"><path d="M3.500 5l3.500 3.500L10.500 5" fill="none" stroke="#c5c2b4" stroke-width="2"/></svg></div><div class="scb" style="left:7px;top:525px;width:16px;height:16px"><svg style="left:0px;top:0px" width="14" height="14" viewBox="0 0 14 14"><path d="M9 3.500L5.500 7 9 10.500" fill="none" stroke="#c5c2b4" stroke-width="2"/></svg></div><div class="scb" style="left:174px;top:525px;width:16px;height:16px"><svg style="left:0px;top:0px" width="14" height="14" viewBox="0 0 14 14"><path d="M5 3.500L8.500 7 5 10.500" fill="none" stroke="#c5c2b4" stroke-width="2"/></svg></div>
<div class="a" style="left:11px;top:545px;width:201px;height:2px;background:#fff"></div>
<div class="a" style="left:214px;top:105px;width:457px;height:1px;background:#c4c0ac"></div><div class="a" style="left:218px;top:106px;width:453px;height:440px;background:#6b6b6b"></div><div class="a" style="left:218px;top:106px;width:400px;height:3px;background:linear-gradient(to right,#7d9cf0,#90a8ee 85%,#6f7fe2 98%,#5a5fd0)"></div><div class="a" style="left:212px;top:546px;width:459px;height:1px;background:#fff"></div><div class="a" style="left:218px;top:109px;width:453px;height:416px;background:linear-gradient(to right,#0a30d8 0px,#0a30d8 1px,#0c5cf3 1px,#0c58f0 4px,#0c58f0 449px,#0a50f0 452px,#001a90 452px)"></div><div class="a" style="left:218px;top:521px;width:453px;height:4px;background:linear-gradient(to bottom,#0c5cf3 0,#0a50f0 3px,#001a90 3px)"></div><div class="a" style="left:218px;top:109px;width:453px;height:22px;background:linear-gradient(to bottom,#3f97ff 0px,#2f88ff 1.5px,#0a6cff 3px,#0059ea 4.5px,#0053e0 7px,#0054e3 11px,#0058ea 14px,#0064f8 17px,#0068ff 19px,#0055e8 20.5px,#0040d0 22px)"></div><svg style="left:223px;top:114px" width="16" height="16" viewBox="0 0 16 16" preserveAspectRatio="none"><rect x=".5" y=".5" width="11" height="6" fill="#fff" stroke="#c8d0e0" stroke-width="1"/><path d="M1.500 6V1.500h9" fill="none" stroke="#4a5878" stroke-width="1"/><rect x="4.500" y="9.500" width="11" height="6" fill="#fff" stroke="#c8d0e0" stroke-width="1"/><path d="M5.500 15v-4.500h9" fill="none" stroke="#4a5878" stroke-width="1"/><path d="M9 3.500h4.500v4" fill="none" stroke="#55607c" stroke-width="1.200"/><path d="M11.300 6.500h4.400l-2.200 2.600z" fill="#55607c"/></svg><div class="t" style="left:242.90px;top:116px;font-size:11.5px;line-height:13px;transform:scaleX(1.0482);font-weight:bold;color:#fff;text-shadow:1px 1px 0 #0a2aa0">Gadgets - unnamed *</div><div class="a" style="left:616px;top:115px;width:13px;height:12px;border:1px solid #fff;border-radius:3px;background:radial-gradient(circle at 30% 30%,#5a8cf5,#2456d8 60%,#1e46c0)"><div class="a" style="left:3px;top:8px;width:5px;height:2px;background:#fff"></div></div><div class="a" style="left:632px;top:115px;width:13px;height:12px;border:1px solid #fff;border-radius:3px;background:radial-gradient(circle at 30% 30%,#5a8cf5,#2456d8 60%,#1e46c0)"><div class="a" style="left:3px;top:2px;width:5px;height:5px;border:1px solid #fff;border-top:2px solid #fff"></div></div><div class="a" style="left:650px;top:115px;width:13px;height:12px;border:1px solid #fff;border-radius:3px;background:radial-gradient(circle at 30% 30%,#e89070,#d4492a 55%,#b8320f)"><svg style="left:2px;top:1.500px" width="9" height="9" viewBox="0 0 9 9"><path d="M1.500 1.500l6 6M7.500 1.500l-6 6" stroke="#fff" stroke-width="2.200"/></svg></div>
<div class="a" style="left:222px;top:131px;width:445px;height:27px;background:#fff"></div><svg style="left:222px;top:158px" width="445" height="363"><defs><pattern id="dots" x="0" y="6" width="8" height="8" patternUnits="userSpaceOnUse"><rect width="1" height="1" fill="#000"/></pattern></defs><rect width="445" height="363" fill="#ece9d8"/><rect width="445" height="363" fill="url(#dots)"/></svg>
<div class="a" style="left:224px;top:134px;width:20px;height:16px;border:3px solid #000"></div><div class="t" style="left:229.80px;top:139px;font-size:11px;line-height:13px;transform:scaleX(0.8696)"><u>F</u>ile</div><div class="t" style="left:254.00px;top:139px;font-size:11px;line-height:13px;transform:scaleX(0.8959)"><u>E</u>dit</div><div class="t" style="left:638.30px;top:139px;font-size:11px;line-height:13px;transform:scaleX(0.9688)"><u>H</u>elp</div>
<div class="a" style="left:294px;top:228px;width:88px;height:73px;background:#fff"></div><div class="a" style="left:382px;top:229px;width:1px;height:73px;background:#000"></div><div class="a" style="left:295px;top:301px;width:88px;height:1px;background:#000"></div><svg style="left:301px;top:234.500px" width="16" height="16" viewBox="0 0 16 16"><path d="M8 6h1.800l.7 8.700H4z" fill="#f6f268"/><path d="M1 4.800L6 .8v9.500L1 15z" fill="#b0b0b0" stroke="#000" stroke-width="1" stroke-linejoin="round"/><path d="M7.500 .5v4.500" stroke="#000" stroke-width="1"/><path d="M9.800 5.200l.7 9.500" stroke="#000" stroke-width="1"/><path d="M7.500 5.200h2.500" stroke="#000" stroke-width=".8"/><path d="M.8 15h10.200" stroke="#000" stroke-width="1.100"/><path d="M13.300 7.200C15 5.200 14.300 2.800 11.800 1.600" fill="none" stroke="#000" stroke-width="1"/><path d="M10.800 1.200h2.700M10.800 1.200v2.500" fill="none" stroke="#000" stroke-width="1"/></svg><svg style="left:300.500px;top:254.500px" width="15" height="15" viewBox="0 0 16 16"><rect x=".8" y=".8" width="14.500" height="14.500" fill="#0a0a0a"/><path d="M.5 1v15h15" fill="none" stroke="#d0d0d0" stroke-width=".8"/><rect x="3.800" y="1.500" width="8.400" height="7" fill="#fff"/><path d="M5 3.300h6M5 5h6M5 6.700h6" stroke="#a8a8a8" stroke-width=".8"/><rect x="3.800" y="10.500" width="8.400" height="4.800" fill="#1a1a1a" stroke="#555" stroke-width=".5"/><rect x="4.600" y="11.300" width="2.200" height="3.300" fill="#c0c0c0"/></svg><div class="t" style="left:322.60px;top:236px;font-size:11px;line-height:13px;transform:scaleX(0.9368)"><u>O</u>pen...</div><div class="t" style="left:322.60px;top:256px;font-size:11px;line-height:13px;transform:scaleX(0.9729)"><u>S</u>ave</div><div class="t" style="left:322.90px;top:283px;font-size:11px;line-height:13px;transform:scaleX(0.8845)">E<u>x</u>it</div><div class="hl a" style="left:300px;top:274px;width:77px;background:#aca899"></div>
<div class="hd" style="left:291px;top:225px"></div><div class="hd" style="left:291px;top:262px"></div><div class="hd" style="left:291px;top:298px"></div><div class="hd" style="left:335px;top:225px"></div><div class="hd" style="left:335px;top:298px"></div><div class="hd" style="left:379px;top:225px"></div><div class="hd" style="left:379px;top:262px"></div><div class="hd" style="left:379px;top:298px"></div>
<svg style="left:0;top:0" width="675" height="547"><path d="M242.800 156.500L331.300 239.800" stroke="#05051e" stroke-width="2.500" fill="none"/><path d="M331.300 239.800L337 246.800" stroke="#000" stroke-width="1.500" fill="none"/><path d="M339.300 249.800l-6.300-2.300 1.500-2 .8 .3 1-1.600 1-.4z" fill="#000"/><path d="M243.500 156.500l-3-3" stroke="#fff" stroke-width="1.500"/></svg>
</body></html>
